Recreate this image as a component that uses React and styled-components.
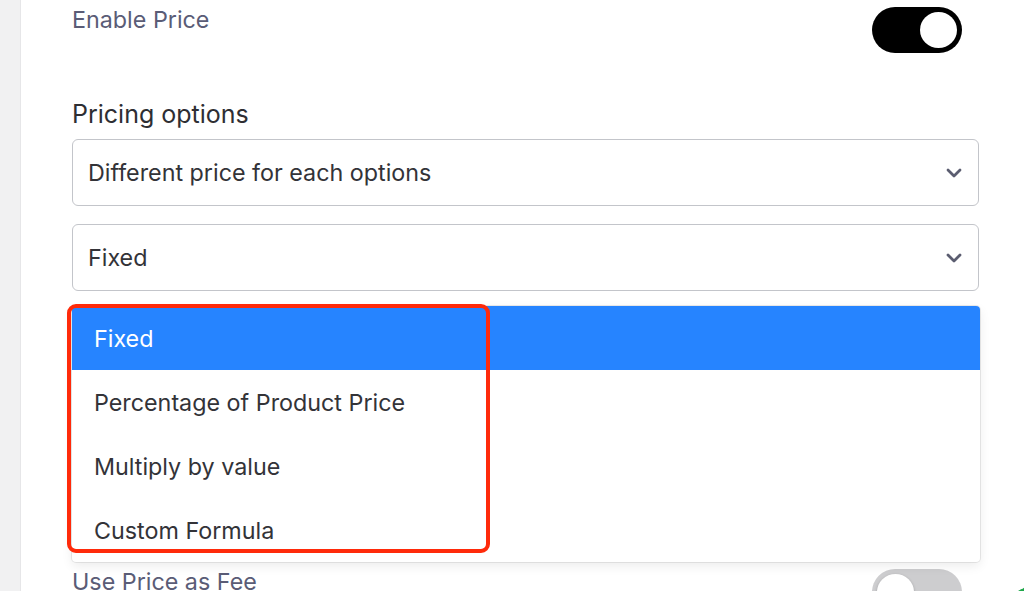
import React from "react";
import styled, { createGlobalStyle } from "styled-components";

const GlobalStyle = createGlobalStyle`
  html, body {
    margin: 0;
    padding: 0;
    background: #ffffff;
    font-family: Inter, "Noto Sans", sans-serif;
  }
  * {
    box-sizing: border-box;
  }
`;

const options = [
  "Fixed",
  "Percentage of Product Price",
  "Multiply by value",
  "Custom Formula",
];

function Chevron() {
  return (
    <svg width="16" height="10" viewBox="0 0 16 10" fill="none">
      <path
        d="M2 2l6 6 6-6"
        stroke="#5b5d70"
        strokeWidth="2.8"
        strokeLinecap="round"
        strokeLinejoin="round"
      />
    </svg>
  );
}

function App() {
  return (
    <>
      <GlobalStyle />
      <Layout>
        <Sidebar />
        <Main>
          <ToggleRow>
            <FieldLabel>Enable Price</FieldLabel>
            <Toggle on />
          </ToggleRow>
          <SectionLabel>Pricing options</SectionLabel>
          <Select>
            <SelectValue>Different price for each options</SelectValue>
            <Chevron />
          </Select>
          <SelectWrap>
            <Select>
              <SelectValue>Fixed</SelectValue>
              <Chevron />
            </Select>
            <Menu>
              {options.map((item, index) => (
                <MenuOption key={item} active={index === 0}>
                  {item}
                </MenuOption>
              ))}
            </Menu>
            <Highlight />
          </SelectWrap>
          <ToggleRow bottom>
            <FieldLabel>Use Price as Fee</FieldLabel>
            <Toggle />
          </ToggleRow>
        </Main>
        <HelpBubble />
      </Layout>
    </>
  );
}

const Layout = styled.div`
  position: relative;
  display: flex;
  width: 100%;
  height: 591px;
  overflow: hidden;
  background: #ffffff;
`;

const Sidebar = styled.div`
  width: 21px;
  flex-shrink: 0;
  background: #f1f1f2;
  border-right: 1px solid #e6e6e8;
`;

const Main = styled.div`
  flex: 1;
  display: flex;
  flex-direction: column;
  padding: 0 45px 0 51px;
`;

const ToggleRow = styled.div`
  display: flex;
  justify-content: space-between;
  align-items: flex-start;
  flex-shrink: 0;
  height: ${(p) => (p.bottom ? "60px" : "99px")};
  margin-top: ${(p) => (p.bottom ? "277px" : "0")};
  padding-top: ${(p) => (p.bottom ? "0" : "6px")};
`;

const FieldLabel = styled.div`
  font-size: 23.3px;
  line-height: 28px;
  color: #5a5c76;
`;

const Toggle = styled.div`
  position: relative;
  width: 90px;
  height: 46px;
  margin-right: 17px;
  margin-top: 1px;
  border-radius: 23px;
  background: ${(p) => (p.on ? "#000000" : "#cdcdcf")};
  flex-shrink: 0;
  &::after {
    content: "";
    position: absolute;
    top: 5px;
    left: ${(p) => (p.on ? "48px" : "5px")};
    width: 37px;
    height: 36px;
    border-radius: 50%;
    background: #ffffff;
    box-shadow: ${(p) => (p.on ? "none" : "0 1px 3px rgba(0,0,0,0.25)")};
  }
`;

const SectionLabel = styled.div`
  font-size: 25px;
  line-height: 30px;
  color: #2e2e33;
  margin-bottom: 10px;
  flex-shrink: 0;
`;

const SelectWrap = styled.div`
  position: relative;
  margin-top: 18px;
  flex-shrink: 0;
`;

const Select = styled.div`
  display: flex;
  align-items: center;
  justify-content: space-between;
  flex-shrink: 0;
  height: 67px;
  padding: 0 16px 0 15px;
  border: 1.5px solid #c3c5ca;
  border-radius: 6px;
  background: #ffffff;
`;

const SelectValue = styled.div`
  font-size: 23.3px;
  color: #333338;
`;

const Menu = styled.div`
  position: absolute;
  top: calc(100% + 15px);
  left: 0;
  right: -1px;
  background: #ffffff;
  border-radius: 4px;
  box-shadow: 0 0 0 1px rgba(0, 0, 0, 0.08), 0 4px 11px rgba(0, 0, 0, 0.08);
  overflow: hidden;
  z-index: 2;
`;

const MenuOption = styled.div`
  height: 64px;
  display: flex;
  align-items: center;
  padding-left: 22px;
  font-size: 23.3px;
  color: ${(p) => (p.active ? "#ffffff" : "#333338")};
  background: ${(p) => (p.active ? "#2684ff" : "transparent")};
`;

const Highlight = styled.div`
  position: absolute;
  top: calc(100% + 13px);
  left: -5px;
  width: 423px;
  height: 249px;
  border: 4.5px solid #ff2a0a;
  border-radius: 9px;
  z-index: 3;
  pointer-events: none;
`;

const HelpBubble = styled.div`
  position: absolute;
  left: 1006px;
  top: 586px;
  width: 56px;
  height: 56px;
  border-radius: 50%;
  background: #1fa74a;
`;

export default App;
